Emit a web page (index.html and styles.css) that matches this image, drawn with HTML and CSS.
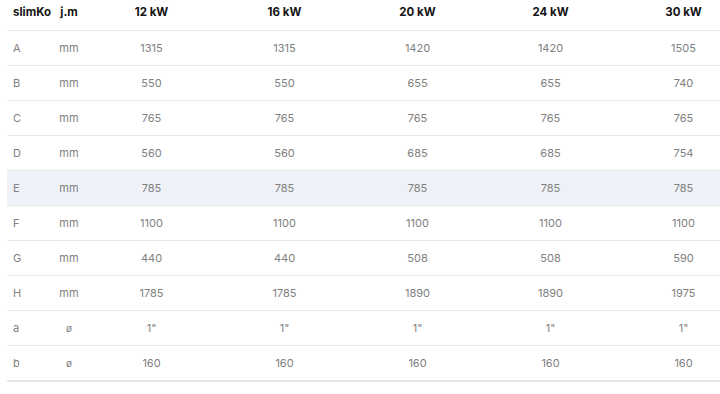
FILE: index.html
```html
<!DOCTYPE html>
<html lang="pl">
<head>
<meta charset="utf-8">
<title>slimKo</title>
<link rel="stylesheet" href="styles.css">
</head>
<body>
<div class="wrap">
<table class="spec">
<colgroup>
<col class="c-name"><col class="c-unit"><col class="c-val"><col class="c-val"><col class="c-val"><col class="c-val"><col class="c-val">
</colgroup>
<thead>
<tr><th class="left">slimKo</th><th>j.m</th><th>12 kW</th><th>16 kW</th><th>20 kW</th><th>24 kW</th><th>30 kW</th></tr>
</thead>
<tbody>
<tr><td class="left">A</td><td>mm</td><td>1315</td><td>1315</td><td>1420</td><td>1420</td><td>1505</td></tr>
<tr><td class="left">B</td><td>mm</td><td>550</td><td>550</td><td>655</td><td>655</td><td>740</td></tr>
<tr><td class="left">C</td><td>mm</td><td>765</td><td>765</td><td>765</td><td>765</td><td>765</td></tr>
<tr><td class="left">D</td><td>mm</td><td>560</td><td>560</td><td>685</td><td>685</td><td>754</td></tr>
<tr class="hl"><td class="left">E</td><td>mm</td><td>785</td><td>785</td><td>785</td><td>785</td><td>785</td></tr>
<tr><td class="left">F</td><td>mm</td><td>1100</td><td>1100</td><td>1100</td><td>1100</td><td>1100</td></tr>
<tr><td class="left">G</td><td>mm</td><td>440</td><td>440</td><td>508</td><td>508</td><td>590</td></tr>
<tr><td class="left">H</td><td>mm</td><td>1785</td><td>1785</td><td>1890</td><td>1890</td><td>1975</td></tr>
<tr><td class="left">a</td><td class="dia">ø</td><td>1"</td><td>1"</td><td>1"</td><td>1"</td><td>1"</td></tr>
<tr class="last"><td class="left">b</td><td class="dia">ø</td><td>160</td><td>160</td><td>160</td><td>160</td><td>160</td></tr>
</tbody>
</table>
</div>
</body>
</html>
```
FILE: styles.css
```css
html, body {
  margin: 0;
  padding: 0;
  background: #ffffff;
  overflow: hidden;
}
.wrap {
  padding-left: 7px;
  width: 713px;
  overflow: hidden;
}
.spec {
  border-collapse: collapse;
  table-layout: fixed;
  width: 743px;
  font-family: Inter, "Noto Sans", sans-serif;
}
.c-name { width: 46px; }
.c-unit { width: 32px; }
.c-val { width: 133px; }
.spec th, .spec td {
  padding: 0;
  text-align: center;
  white-space: nowrap;
}
.spec .left {
  text-align: left;
  padding-left: 6px;
}
.spec th {
  height: 30px;
  font-size: 11.5px;
  font-weight: 700;
  color: #141414;
  border-bottom: 1px solid #e8e8e8;
  vertical-align: middle;
  padding-bottom: 5px;
  box-sizing: border-box;
}
.spec td {
  height: 34px;
  font-size: 11px;
  font-weight: 400;
  color: #808080;
  border-bottom: 1px solid #e8e8e8;
}
.spec tr.hl td {
  background: #eef2f8;
}
.spec tr.last td {
  border-bottom: 2px solid #e6e6e6;
}
.spec td.dia {
  font-size: 10px;
}
```
